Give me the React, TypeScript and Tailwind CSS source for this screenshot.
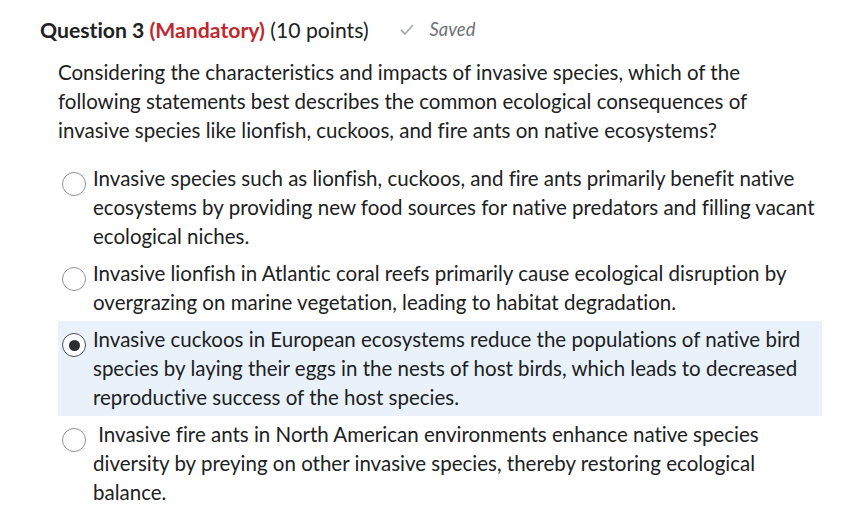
import React from "react";

const options = [
  "Invasive species such as lionfish, cuckoos, and fire ants primarily benefit native ecosystems by providing new food sources for native predators and filling vacant ecological niches.",
  "Invasive lionfish in Atlantic coral reefs primarily cause ecological disruption by overgrazing on marine vegetation, leading to habitat degradation.",
  "Invasive cuckoos in European ecosystems reduce the populations of native bird species by laying their eggs in the nests of host birds, which leads to decreased reproductive success of the host species.",
  "\u00a0Invasive fire ants in North American environments enhance native species diversity by preying on other invasive species, thereby restoring ecological balance.",
];

function Radio({ checked }: { checked: boolean }) {
  return (
    <span
      className={
        "mt-[8px] flex h-[24px] w-[24px] shrink-0 items-center justify-center rounded-full border-[1.5px] bg-white " +
        (checked ? "border-[#494c4e]" : "border-[#8f9499]")
      }
    >
      {checked && <span className="h-[11px] w-[11px] rounded-full bg-[#2b2d2f]" />}
    </span>
  );
}

export default function App() {
  const selected = 2;
  return (
    <div className="h-[506px] w-[858px] bg-white pl-[40px] pt-[17px] font-['Lato','Noto_Sans',sans-serif] text-[#202122] [font-variant-ligatures:none]">
      <div className="flex items-center h-[26px]">
        <h2 className="text-[21.2px] leading-[26px]">
          <span className="font-bold">Question 3 </span>
          <span className="font-bold text-[#c0282e]">(Mandatory)</span>
          <span> (10 points)</span>
        </h2>
        <span className="ml-[31px] flex items-center gap-[16px] text-[#6e7376]">
          <svg width="14" height="12" viewBox="0 0 14 12" fill="none">
            <path d="M1.5 6.5l3.5 3.5 7.5-8.5" stroke="#a9adb1" strokeWidth="1.8" strokeLinecap="round" strokeLinejoin="round" />
          </svg>
          <span className="text-[18.4px] italic">Saved</span>
        </span>
      </div>

      <p className="mt-[15px] ml-[18px] w-[730px] text-[20.5px] leading-[29px]">
        Considering the characteristics and impacts of invasive species, which of the following statements best describes the common ecological consequences of invasive species like lionfish, cuckoos, and fire ants on native ecosystems?
      </p>

      <div className="mt-[15px] ml-[18px] w-[764px] flex flex-col">
        {options.map((o, i) => (
          <label
            key={i}
            className={
              "flex gap-[7px] pl-[4px] pr-[4px] pt-[4px] pb-[4px] " +
              (i === selected ? "bg-[#e9f2fb]" : "")
            }
          >
            <Radio checked={i === selected} />
            <span className="text-[20.5px] leading-[29px]">{o}</span>
          </label>
        ))}
      </div>
    </div>
  );
}
